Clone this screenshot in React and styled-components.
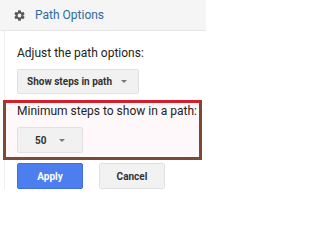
import React from "react";
import styled, { createGlobalStyle } from "styled-components";

const GlobalStyle = createGlobalStyle`
  body {
    margin: 0;
    background: #ffffff;
    font-family: Roboto, "Liberation Sans", sans-serif;
  }
`;

const Panel = styled.div`
  width: 206px;
  height: 200px;
  overflow: hidden;
`;

const Header = styled.div`
  display: flex;
  align-items: center;
  gap: 9px;
  height: 30px;
  padding-left: 13px;
  background: #f5f5f5;
  border-bottom: 1px solid #e6e6e6;
`;

const Title = styled.span`
  font-size: 12px;
  color: #2c6a9c;
`;

const Body = styled.div`
  display: flex;
  flex-direction: column;
  border-left: 1px solid #eeeeee;
  margin-left: 4px;
  padding-top: 15px;
`;

const Label = styled.div`
  font-size: 12px;
  line-height: 14px;
  color: #222222;
  padding-left: ${(p) => p.$indent || 0}px;
`;

const Select = styled.div`
  display: flex;
  align-items: center;
  justify-content: space-between;
  box-sizing: border-box;
  width: ${(p) => p.$width}px;
  height: ${(p) => p.$height}px;
  margin-top: ${(p) => p.$top}px;
  margin-left: ${(p) => p.$left || 0}px;
  padding: 0 ${(p) => p.$padRight}px 0 ${(p) => p.$padLeft}px;
  background: #f1f1f1;
  border: 1px solid #e2e2e2;
  border-radius: 2px;
  font-size: 10px;
  font-weight: 700;
  color: #333333;
`;

const Caret = styled.span`
  width: 0;
  height: 0;
  border-left: 3px solid transparent;
  border-right: 3px solid transparent;
  border-top: 3px solid #777777;
`;

const Highlight = styled.div`
  margin: 6px 0 0 -2px;
  width: 199px;
  box-sizing: border-box;
  padding: 1px 0 4px 11px;
  background: #fff8fb;
  border: 3px solid #7b4a33;
  border-top-color: #d4202c;
`;

const Actions = styled.div`
  display: flex;
  gap: 16px;
  margin: 3px 0 0 12px;
`;

const Button = styled.button`
  width: 66px;
  height: 26px;
  padding: 0;
  border-radius: 2px;
  font-family: Roboto, "Liberation Sans", sans-serif;
  font-size: 10px;
  font-weight: 700;
  cursor: pointer;
  background: ${(p) => (p.$primary ? "#4d7ef0" : "#f2f2f2")};
  color: ${(p) => (p.$primary ? "#ffffff" : "#333333")};
  border: 1px solid ${(p) => (p.$primary ? "#3f6fe0" : "#e0e0e0")};
`;

const Gear = () => (
  <svg width="13" height="13" viewBox="0 0 24 24">
    <path
      fill="#555"
      d="M19.14 12.94c.04-.3.06-.61.06-.94s-.02-.64-.07-.94l2.03-1.58a.49.49 0 0 0 .12-.61l-1.92-3.32a.49.49 0 0 0-.59-.22l-2.39.96a7 7 0 0 0-1.62-.94l-.36-2.54A.48.48 0 0 0 13.92 2.4h-3.84a.48.48 0 0 0-.48.41l-.36 2.54a7.3 7.3 0 0 0-1.62.94l-2.39-.96a.48.48 0 0 0-.59.22L2.72 8.87a.47.47 0 0 0 .12.61l2.03 1.58c-.05.3-.07.62-.07.94s.02.64.07.94l-2.03 1.58a.49.49 0 0 0-.12.61l1.92 3.32c.12.22.37.29.59.22l2.39-.96c.5.38 1.03.7 1.62.94l.36 2.54c.05.24.24.41.48.41h3.840c.24 0 .44-.17.47-.41l.36-2.54a6.9 6.9 0 0 0 1.62-.94l2.39.96c.22.08.47 0 .59-.22l1.92-3.32a.47.47 0 0 0-.12-.61l-2.01-1.58zM12 15.6A3.6 3.6 0 1 1 12 8.4a3.6 3.6 0 0 1 0 7.2z"
    />
  </svg>
);

export default function App() {
  return (
    <Panel>
      <GlobalStyle />
      <Header>
        <Gear />
        <Title>Path Options</Title>
      </Header>
      <Body>
        <Label $indent={12}>Adjust the path options:</Label>
        <Select
          $width={122}
          $height={25}
          $top={9}
          $left={12}
          $padLeft={9}
          $padRight={11}
        >
          Show steps in path
          <Caret />
        </Select>
        <Highlight>
          <Label>Minimum steps to show in a path:</Label>
          <Select $width={66} $height={26} $top={9} $padLeft={17} $padRight={17}>
            50
            <Caret />
          </Select>
        </Highlight>
        <Actions>
          <Button $primary>Apply</Button>
          <Button>Cancel</Button>
        </Actions>
      </Body>
    </Panel>
  );
}
